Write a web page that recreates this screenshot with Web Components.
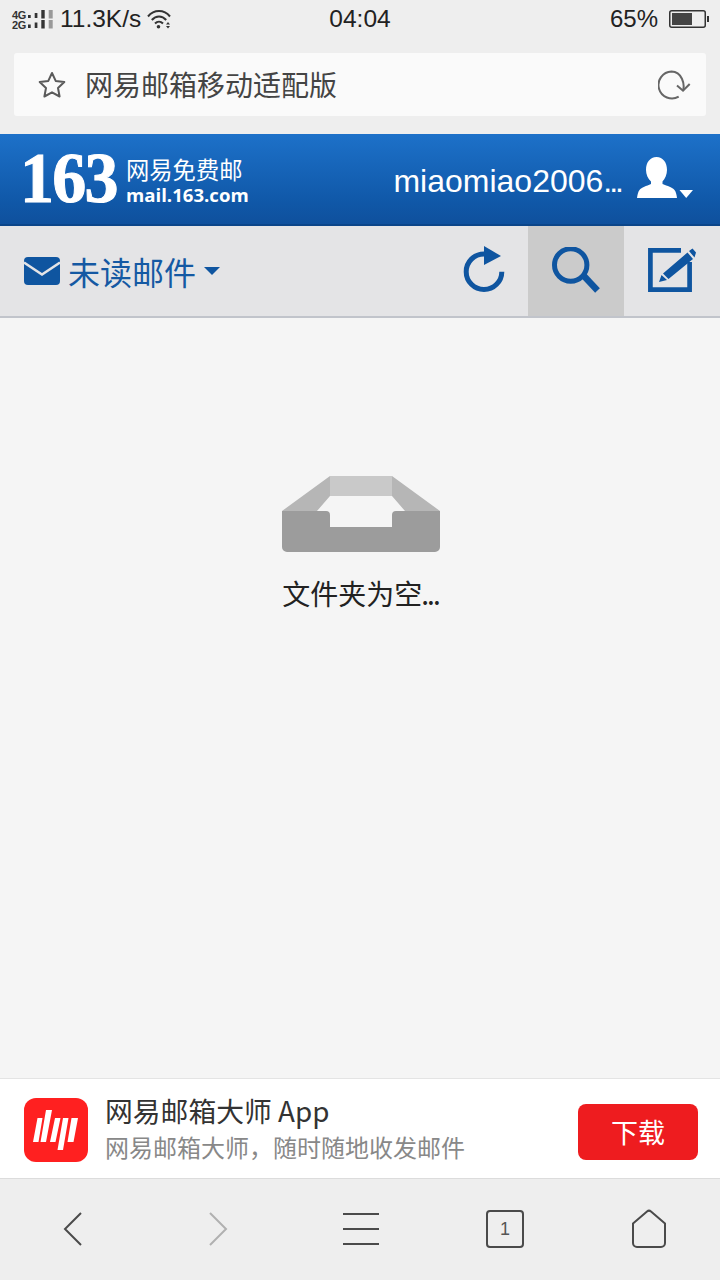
<!DOCTYPE html>
<html lang="zh"><head><meta charset="utf-8"><title>网易邮箱</title>
<style>
html,body{margin:0;padding:0}
body{width:720px;height:1280px;overflow:hidden;display:flex;flex-direction:column;background:#f5f5f5;font-family:"Noto Sans CJK SC","Liberation Sans",sans-serif}
</style></head><body>
<x-status-bar></x-status-bar>
<x-address-bar>网易邮箱移动适配版</x-address-bar>
<x-mail-header user="miaomiao2006"></x-mail-header>
<x-mail-toolbar>未读邮件</x-mail-toolbar>
<x-empty-state>文件夹为空<span style="letter-spacing:-2px;margin-left:-1px">...</span></x-empty-state>
<x-app-banner></x-app-banner>
<x-browser-nav></x-browser-nav>
<script>
function def(name, html){
  customElements.define(name, class extends HTMLElement{
    constructor(){super();const r=this.attachShadow({mode:'open'});r.innerHTML=html;}
    connectedCallback(){ if(this.hasAttribute('user')){this.shadowRoot.querySelector('.name').textContent=this.getAttribute('user');} }
  });
}
const LAT='"Liberation Sans",Arial,sans-serif', CJK='"Noto Sans CJK SC","Liberation Sans",sans-serif';
def('x-status-bar',`<style>
:host{display:grid;grid-template-columns:1fr auto 1fr;align-items:center;height:38px;background:#eee;color:#222;font:24.500px/38px ${LAT}}
.l{display:flex;align-items:center;padding-left:12px}
.net{display:flex;flex-direction:column;font:700 11px/10px ${LAT};color:#333;width:16px;letter-spacing:-.3px;margin-top:1px}
.speed{margin-left:7px;margin-right:6px}
.r{display:flex;align-items:center;justify-content:flex-end;padding-right:11px}
.pct{margin-right:11px;font-size:24px}
svg{display:block}
</style>
<div class="l"><div class="net"><span>4G</span><span>2G</span></div>
<svg width="25" height="19" viewBox="0 0 25 19"><g fill="#333"><rect x="0" y="5" width="2.700" height="3"/><rect x="6.700" y="3" width="2.700" height="5"/><rect x="13.300" y="0" width="3.400" height="8.500"/><rect x="0" y="14.500" width="2.700" height="3.500"/><rect x="6.700" y="12.500" width="2.700" height="5.500"/><rect x="13.300" y="10" width="3.400" height="8.500"/></g><g fill="#999"><rect x="20.700" y="0" width="4" height="8.500"/><rect x="20.700" y="10" width="4" height="8.500"/></g></svg>
<span class="speed">11.3K/s</span>
<svg width="24" height="20" viewBox="0 0 24 20" fill="none" stroke="#333" stroke-width="2"><path d="M1 7.500C7 .2 17 .2 23 7.500"/><path d="M4.800 11C9 6.300 15 6.300 19.200 11"/><path d="M8 14.500c2.400-2.400 5.600-2.400 8 0"/><circle cx="11.500" cy="17.800" r="1.800" fill="#333" stroke="none"/><path fill="#333" stroke="none" d="M19 15.500h4l-2-2.500zM19 17h4l-2 2.500z"/></svg></div>
<div>04:04</div>
<div class="r"><span class="pct">65%</span>
<svg width="40" height="18" viewBox="0 0 40 18"><rect x=".75" y=".75" width="35.500" height="16.500" rx="2" fill="none" stroke="#333" stroke-width="1.500"/><rect x="3" y="3" width="20" height="12" fill="#444"/><rect x="38" y="6" width="2" height="6" fill="#333"/></svg></div>`);
def('x-address-bar',`<style>
:host{display:block;background:#eee;padding:15px 14px 18px}
.box{display:flex;align-items:center;height:63px;background:#fafafa;border-radius:3px;color:#444;font:28px/63px ${CJK}}
.star{margin-left:24px;margin-right:19px}
.t{flex:1;white-space:nowrap}
.re{margin-right:14px}
svg{display:block}
</style><div class="box">
<svg class="star" width="28" height="27" viewBox="0 0 28 27" fill="none" stroke="#5a5a5a" stroke-width="2" stroke-linejoin="round"><path d="M14 2l3.700 7.900 8.600 1.100-6.300 6 1.600 8.500-7.600-4.200-7.600 4.200 1.600-8.500-6.300-6 8.600-1.100z"/></svg>
<span class="t"><slot></slot></span>
<svg class="re" width="34" height="30" viewBox="0 0 34 30" fill="none" stroke="#666" stroke-width="2"><path d="M25 20.700C27 14.500 24 1.500 13.500 1.500A13.500 13.500 0 1 0 20.700 26.700"/><path d="M19 15.500l6 5.200 6.700-6.700"/></svg>
</div>`);
def('x-mail-header',`<style>
:host{display:flex;align-items:center;box-sizing:border-box;height:92px;background:linear-gradient(#1d71c9,#1058a8 75%,#0f509d);border-bottom:2px solid #0b4589;color:#fff;padding-left:20px}
.n{font:700 68px/68px "Liberation Serif",serif;letter-spacing:-1.800px;-webkit-text-stroke:1px #fff;width:106px;margin-top:-2px;flex:none;transform:scaleY(1.06)}
.s{display:flex;flex-direction:column;flex:1;margin-top:2px}
.c{font:23.300px/30px ${CJK};white-space:nowrap}
.m{font:700 18.600px/22px "Open Sans",sans-serif}
.user{font:32px/40px ${LAT};white-space:nowrap;margin-right:16px;margin-top:3px;display:flex}
.dots{letter-spacing:-3px}
.ic{margin-right:27px;margin-top:-3px;display:block}
</style>
<div class="n">163</div>
<div class="s"><span class="c">网易免费邮</span><span class="m">mail.163.com</span></div>
<span class="user"><span class="name"></span><span class="dots">...</span></span>
<svg class="ic" width="56" height="41" viewBox="0 0 56 41" fill="#fff"><path d="M19.500 0c6.500 0 10.500 5.500 10.500 13 0 4.500-2 9-4.500 11.500V27c5 2 10 3.500 12 6 1.500 2 2 4.500 2.500 8H0c.500-3.500 1-6 2.500-8 2-2.500 7-4 11.500-6v-2.500C11 22 9 17.500 9 13 9 5.500 13 0 19.500 0z"/><path d="M42.500 33h13.500l-6.800 8z"/></svg>`);
def('x-mail-toolbar',`<style>
:host{display:flex;align-items:stretch;box-sizing:border-box;height:92px;background:#e4e4e6;border-bottom:2px solid #c1c4cb;color:#1559a3}
.f{flex:1;display:flex;align-items:center;padding-left:24px;font:32px/90px ${CJK}}
.f .t{margin:-1px 7px 0 8px;white-space:nowrap}
.b{width:96px;display:flex;align-items:center;justify-content:center}
.b.on{background:#cbcbcb}
svg{display:block}
</style>
<div class="f"><svg width="36" height="28" viewBox="0 0 36 28"><rect width="36" height="28" rx="4" fill="#0f55a0"/><path fill="none" stroke="#e4e4e6" stroke-width="2.500" d="M0 5.500l18 12 18-12"/></svg><span class="t"><slot></slot></span><svg width="16" height="8" viewBox="0 0 16 8" style="margin-left:1px"><path fill="#0f55a0" d="M0 0h16l-8 8z"/></svg></div>
<div class="b"><svg width="48" height="48" viewBox="0 0 48 48" style="margin:-2px 0 0 8px"><path fill="none" stroke="#0f55a0" stroke-width="5" d="M24 7.900A17.800 17.800 0 1 0 41.800 25.700"/><path fill="#0f55a0" d="M24 0l17 10-17 9z"/></svg></div>
<div class="b on"><svg width="48" height="48" viewBox="0 0 48 48"><circle cx="18.700" cy="18" r="16.200" fill="none" stroke="#0f55a0" stroke-width="5"/><path stroke="#0f55a0" stroke-width="6.500" d="M31 28l14.500 15.500"/></svg></div>
<div class="b"><svg width="48" height="48" viewBox="0 0 48 48"><path fill="none" stroke="#0f55a0" stroke-width="4.700" d="M33 3.300H2.400V42.700H41.600V15"/><path fill="#0f55a0" d="M11 35l2.500-7 5.500 5zM15 26.500L39.500 5.500 45 12 20.500 32zM41 4l3.500-2.500 3.500 4-1.500 5z"/></svg></div>`);
def('x-empty-state',`<style>
:host{display:flex;flex-direction:column;align-items:center;flex:1;background:#f5f5f5;padding-top:158px;box-sizing:border-box;color:#222}
svg{display:block;margin-left:2px}
.t{font:28px/40px ${CJK};margin-top:21px;margin-left:1px;white-space:nowrap}
</style>
<svg width="158" height="76" viewBox="0 0 158 76"><path fill="#b6b6b6" d="M0 35L48 0h62l48 35h-35l-13-15H48L35 35z"/><path fill="#c9c9c9" d="M48 0h62v20H48z"/><path fill="#9c9c9c" d="M0 35h44a4 4 0 0 1 4 4v12h62V39a4 4 0 0 1 4-4h44v36a5 5 0 0 1-5 5H5a5 5 0 0 1-5-5z"/></svg>
<div class="t"><slot></slot></div>`);
def('x-app-banner',`<style>
:host{display:flex;align-items:center;box-sizing:border-box;height:101px;background:#fff;border-top:1px solid #e4e4e4;border-bottom:1px solid #dcdcdc;padding:2px 22px 0 24px}
.i{display:block;flex:none;margin-right:17px}
.x{flex:1;display:flex;flex-direction:column;white-space:nowrap;margin-top:-4px}
.a{font:27.800px/36px ${CJK};color:#333;margin-bottom:2px}
.b{font:24px/34px ${CJK};color:#888}
.d{width:120px;height:56px;border-radius:8px;background:#ee1c1f;color:#fff;font:27px/56px ${CJK};text-align:center;margin-top:4px}
</style>
<svg class="i" width="64" height="64" viewBox="0 0 64 64"><rect width="64" height="64" rx="12" fill="#ff2020"/><g fill="#fff"><path d="M13.500 20h5l-4 24H9zM22 12h6l-6 32h-5.500zM31 20h5.500l-5 24H26zM39 20h5.500L39 52h-5.500zM47.500 20H54l-4.500 24h-6z"/></g></svg>
<div class="x"><span class="a">网易邮箱大师 App</span><span class="b">网易邮箱大师，随时随地收发邮件</span></div>
<div class="d">下载</div>`);
def('x-browser-nav',`<style>
:host{display:grid;grid-template-columns:repeat(5,144px);height:101px;background:#eee;flex:none;padding-left:1px}
.c{display:flex;align-items:center;justify-content:center;margin-top:-1px}
svg{display:block}
.tab{width:38px;height:38px;box-sizing:border-box;border:2px solid #4a4a4a;border-radius:4px;color:#555;font:18px/34px ${LAT};text-align:center}
</style>
<div class="c"><svg width="20" height="36" viewBox="0 0 20 36" fill="none" stroke="#4a4a4a" stroke-width="2"><path d="M18 2L2 18l16 16"/></svg></div>
<div class="c"><svg width="20" height="36" viewBox="0 0 20 36" fill="none" stroke="#b0b0b0" stroke-width="2" style="margin-left:2px"><path d="M2 2l16 16L2 34"/></svg></div>
<div class="c"><svg width="36" height="32" viewBox="0 0 36 32" fill="none" stroke="#4a4a4a" stroke-width="2"><path d="M0 1h36M0 16h36M0 31h36"/></svg></div>
<div class="c"><div class="tab">1</div></div>
<div class="c"><svg width="36" height="40" viewBox="0 0 36 40" fill="none" stroke="#4a4a4a" stroke-width="2" stroke-linejoin="round"><path d="M16 2.500L2 14.500V34a4 4 0 0 0 4 4h24a4 4 0 0 0 4-4V14.500L20 2.500a3 3 0 0 0-4 0z"/></svg></div>`);
</script>
</body></html>
